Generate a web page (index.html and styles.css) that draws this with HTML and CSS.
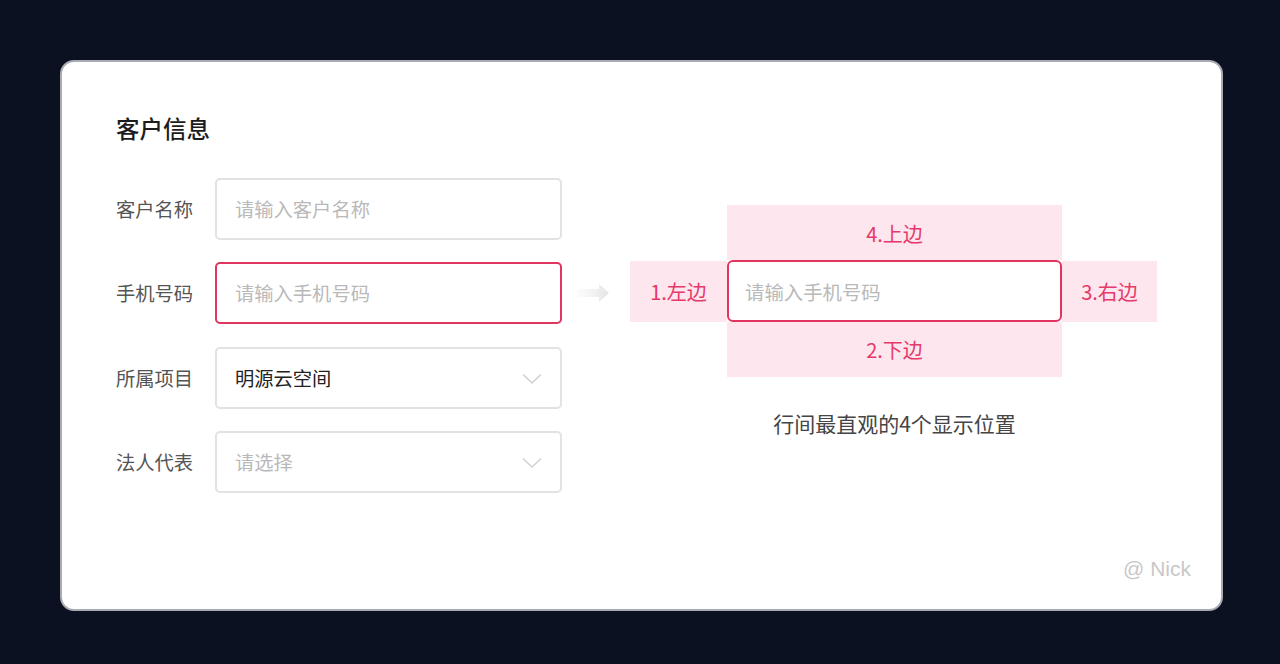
FILE: index.html
```html
<!DOCTYPE html>
<html lang="zh-CN">
<head>
<meta charset="utf-8">
<title>客户信息</title>
<link rel="stylesheet" href="styles.css">
</head>
<body>
<div class="card">
  <div class="form">
    <h1 class="title">客户信息</h1>
    <div class="rows">
      <div class="row">
        <span class="label">客户名称</span>
        <div class="field"><span class="ph">请输入客户名称</span></div>
      </div>
      <div class="row">
        <span class="label">手机号码</span>
        <div class="field error"><span class="ph">请输入手机号码</span></div>
      </div>
      <div class="row">
        <span class="label">所属项目</span>
        <div class="field select"><span class="val">明源云空间</span>
          <svg class="chev" width="20" height="12" viewBox="0 0 20 12"><path d="M1 1.5 L10 10 L19 1.5" fill="none" stroke="#d0d0d0" stroke-width="1.5"/></svg>
        </div>
      </div>
      <div class="row">
        <span class="label">法人代表</span>
        <div class="field select"><span class="ph">请选择</span>
          <svg class="chev" width="20" height="12" viewBox="0 0 20 12"><path d="M1 1.5 L10 10 L19 1.5" fill="none" stroke="#d0d0d0" stroke-width="1.5"/></svg>
        </div>
      </div>
    </div>
  </div>

  <svg class="arrow" width="32" height="18" viewBox="0 0 32 18">
    <defs>
      <linearGradient id="ag" x1="0" y1="0" x2="1" y2="0">
        <stop offset="0" stop-color="#f4f4f4" stop-opacity="0.3"/>
        <stop offset="1" stop-color="#e3e3e3"/>
      </linearGradient>
    </defs>
    <path d="M0 5 H22 V0 L32 9 L22 18 V13 H0 Z" fill="url(#ag)"/>
  </svg>

  <div class="demo">
    <div class="grid">
      <div class="cell top">4.上边</div>
      <div class="cell left">1.左边</div>
      <div class="cell mid"><span class="ph">请输入手机号码</span></div>
      <div class="cell right">3.右边</div>
      <div class="cell bottom">2.下边</div>
    </div>
    <p class="caption">行间最直观的4个显示位置</p>
  </div>

  <span class="mark">@ Nick</span>
</div>
</body>
</html>
```

FILE: styles.css
```css
* { box-sizing: border-box; }
html, body { margin: 0; padding: 0; }
body {
  background: #0b1120;
  width: 1280px;
  height: 664px;
  padding: 60px 0 0 60px;
  font-family: "Noto Sans CJK SC", "Noto Sans", sans-serif;
}
.card {
  position: relative;
  width: 1163px;
  height: 551px;
  background: #fff;
  border: 2px solid #a9abb2;
  border-radius: 14px;
  display: flex;
  align-items: flex-start;
  padding: 50px 0 0 54px;
}
.form { width: 446px; flex: none; }
.title {
  margin: 0;
  font-size: 23.5px;
  line-height: 32px;
  font-weight: 500;
  color: #1c1c1c;
}
.rows {
  margin-top: 34px;
  display: flex;
  flex-direction: column;
  gap: 22.4px;
}
.row { display: flex; align-items: center; }
.label {
  width: 99px;
  flex: none;
  font-size: 19.3px;
  color: #555;
  line-height: 26px;
}
.field {
  width: 347px;
  height: 62px;
  border: 2px solid #e2e2e2;
  border-radius: 5px;
  display: flex;
  align-items: center;
  padding: 0 18px;
  font-size: 19.3px;
}
.field.error { border-color: #e03560; }
.field.select { justify-content: space-between; }
.ph { color: #b9b9b9; }
.val { color: #222; }
.chev { position: relative; top: 1px; }
.arrow { flex: none; margin: 172px 0 0 15px; }
.demo { flex: none; margin: 93px 0 0 21px; display: flex; flex-direction: column; }
.grid {
  display: grid;
  grid-template-columns: 97px 335px 95px;
  grid-template-rows: 55px 62px 55px;
}
.cell {
  display: flex;
  align-items: center;
  justify-content: center;
  background: #fde6ed;
  color: #e6386a;
  font-size: 20px;
}
.top { grid-column: 2; grid-row: 1; padding-top: 2px; }
.left { grid-column: 1; grid-row: 2; margin-top: 1px; }
.mid {
  grid-column: 2; grid-row: 2;
  background: #fff;
  border: 2px solid #e03560;
  border-radius: 6px;
  justify-content: flex-start;
  padding-left: 16px;
  font-size: 19.4px;
}
.right { grid-column: 3; grid-row: 2; margin-top: 1px; }
.bottom { grid-column: 2; grid-row: 3; }
.caption {
  margin: 32px 0 0 97px;
  width: 335px;
  text-align: center;
  font-size: 21px;
  line-height: 28px;
  color: #454545;
}
.mark {
  position: absolute;
  right: 30px;
  bottom: 28px;
  font-size: 21px;
  line-height: 24px;
  color: #c8c8c8;
  font-family: "Liberation Sans", "Noto Sans", sans-serif;
}
```
